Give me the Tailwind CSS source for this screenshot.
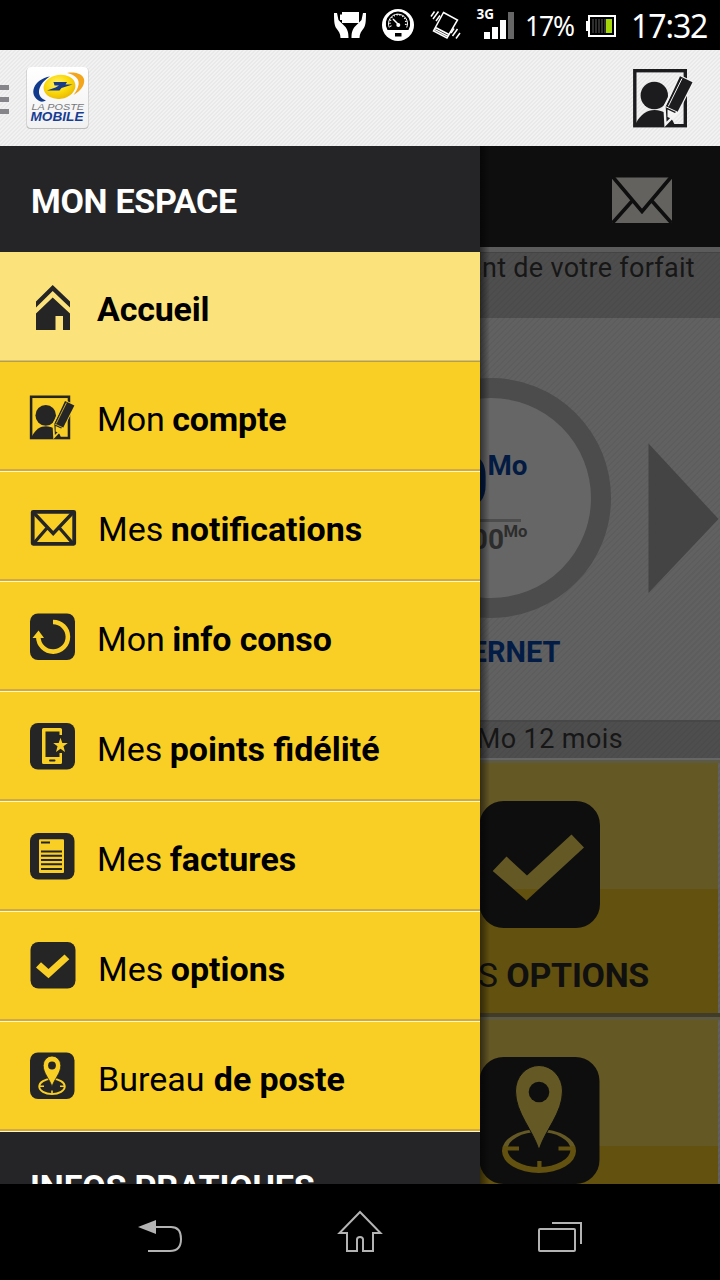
<!DOCTYPE html>
<html lang="fr">
<head>
<meta charset="utf-8">
<title>La Poste Mobile</title>
<script src="https://cdn.jsdelivr.net/npm/@tailwindcss/browser@4"></script>
</head>
<body class="w-[720px] h-[1280px] overflow-hidden bg-black flex flex-col font-['Roboto',sans-serif]">

<svg class="hidden">
  <symbol id="account" viewBox="630 66 66 64">
    <rect x="634.8" y="70.7" width="50.5" height="55" fill="none" stroke="currentColor" stroke-width="3.4"/>
    <circle cx="654.3" cy="95.5" r="13.7" fill="currentColor"/>
    <path d="M636 123C641 114 647 110 654.500 110C663 110 671 115 674.500 124.500V126H636Z" fill="currentColor"/>
    <path d="M680 76.300L692.500 82.300L677.500 112L665.500 124.500L664.500 106.500Z" fill="currentColor" stroke="var(--paper)" stroke-width="2.400"/>
    <path d="M680 76.300L692.500 82.300L677.500 112L666 106.500Z" fill="currentColor"/>
    <path d="M682 78.500L668.300 106.300M666 106.800L677.600 112.200" stroke="var(--paper)" stroke-width="1" fill="none"/>
    <path d="M667.500 109.500L675.500 113.200L670.500 118.200L667.500 117Z" fill="var(--paper)"/>
  </symbol>
</svg>

<!-- Status bar -->
<header class="h-[50px] shrink-0 flex items-start text-white font-['Noto_Sans',sans-serif]">
  <svg class="ml-[330px] w-[190px] h-[50px] shrink-0" viewBox="330 0 190 50">
    <g fill="#fff">
      <path d="M342 12H359V23H342V20H340V14.500H342Z"/>
      <path id="hand" d="M334 13H337L338.500 20L345 26.500C347.500 29.500 348.500 32 348.500 38H340.500C340.500 33.500 338.500 31 336.500 28.500C334.500 26 334 22 334 13Z"/>
      <use href="#hand" transform="matrix(-1 0 0 1 700 0)"/>
      <circle cx="398" cy="25" r="16"/>
    </g>
    <path d="M387.500 30A12.200 12.200 0 1 1 408.500 30Z" fill="#000"/>
    <path d="M389.300 27.500A9.500 9.500 0 1 1 406.700 27.500" fill="none" stroke="#fff" stroke-width="1"/>
    <path d="M391 26.500A8 8 0 1 1 405 26.500" fill="none" stroke="#fff" stroke-width="1.800" stroke-dasharray="1 2"/>
    <path d="M393 19L398.500 24.500" stroke="#fff" stroke-width="1.500"/>
    <circle cx="398.300" cy="25" r="2" fill="#fff"/>
    <rect x="395" y="33" width="6.500" height="3.500" fill="#000"/>
    <g fill="none" stroke="#fff" stroke-width="1.500">
      <path d="M443.500 12.500L457.500 20L447 38L433.500 31ZM435.500 27.500L449 34.500M434.500 29.300L448 36.300"/>
      <path d="M431 16.500L434.500 11.500M433 19L438.500 11.500M436 21L440 15.500M451 33L454 28.500M452.500 36L457.500 29M456 38.500L460 33"/>
    </g>
    <text x="476.500" y="19" font-family="Noto Sans" font-weight="700" font-size="14" textLength="17.500" lengthAdjust="spacingAndGlyphs" fill="#fff">3G</text>
    <path d="M484 32h6v7h-6ZM492 27h6v12h-6ZM500 20h6v19h-6Z" fill="#fff"/>
    <path d="M508 12h6v27h-6Z" fill="#666"/>
  </svg>
  <span class="ml-[5px] mt-[6px] w-[61px] text-[26.5px] leading-[40px] tracking-[-1.2px]">17%</span>
  <svg class="w-[32px] h-[50px] shrink-0" viewBox="586 0 32 50">
    <rect x="589" y="16" width="26" height="20" fill="none" stroke="#fff" stroke-width="2"/>
    <rect x="586" y="21" width="2.500" height="10" fill="#fff"/>
    <g fill="#2d2d2d"><path d="M592 19h2v14h-2ZM595 19h2v14h-2ZM598 19h2v14h-2ZM601 19h2v14h-2ZM604 19h2v14h-2Z"/></g>
    <rect x="606" y="19" width="6" height="14" fill="#a4d60a"/>
  </svg>
  <span class="ml-[13px] mt-[5px] text-[32px] leading-[42px] tracking-[-1.1px]">17:32</span>
</header>

<!-- Action bar -->
<div class="h-[96px] shrink-0 flex items-center bg-[repeating-linear-gradient(135deg,#f2f2f2_0px,#f2f2f2_1.6px,#e9e9e9_1.6px,#e9e9e9_2.83px)]">
  <div class="w-[9px] flex flex-col gap-[7px] mt-[3px]">
    <i class="block h-[5px] bg-[#85858a]"></i><i class="block h-[5px] bg-[#85858a]"></i><i class="block h-[5px] bg-[#85858a]"></i>
  </div>
  <svg class="ml-[15px] w-[68px] h-[68px]" viewBox="24 64 68 68">
    <defs>
      <radialGradient id="sun" cx=".45" cy=".35" r=".7"><stop offset="0" stop-color="#fff27a"/><stop offset=".5" stop-color="#fbdc0c"/><stop offset="1" stop-color="#e9b500"/></radialGradient>
      <linearGradient id="card" x2="0" y2="1"><stop offset="0" stop-color="#fff"/><stop offset="1" stop-color="#f1f1f2"/></linearGradient>
    </defs>
    <rect x="26.500" y="67.500" width="62" height="61.500" rx="4" fill="#bbb"/>
    <rect x="27" y="67" width="61" height="61" rx="4" fill="url(#card)"/>
    <path d="M50 76.500C34 79 27 95 40.500 101.500C42.500 102 45 101 46 100.500C34 96 39 83 50 76.500Z" fill="#123a8c"/>
    <path d="M67 73C78 71 88 76 83 86C81 90 77 93 73.500 95C79 88 84 77 67 73Z" fill="#f3a51c"/>
    <ellipse cx="59.500" cy="86.800" rx="16" ry="12" transform="rotate(-8 59.500 86.800)" fill="url(#sun)"/>
    <path d="M53.500 82H67L65.500 84.500H72.500L61.500 88L59.500 90.500H47L55.500 87.500L59 85.500H54.500Z" fill="#173b85"/>
    <text x="31.500" y="109.500" font-family="Liberation Sans" font-style="italic" font-size="9.300" textLength="52.500" lengthAdjust="spacingAndGlyphs" fill="#77787b">LA POSTE</text>
    <text x="30.500" y="121" font-family="Liberation Sans" font-style="italic" font-weight="700" font-size="12.500" textLength="53" lengthAdjust="spacingAndGlyphs" fill="#173d93">MOBILE</text>
  </svg>
  <svg class="ml-[538px] w-[66px] h-[64px] text-[#1c1b1e] [--paper:#f4f4f4]"><use href="#account"/></svg>
</div>

<div class="h-[1038px] shrink-0 flex">
  <!-- Drawer -->
  <nav class="w-[480px] shrink-0 overflow-hidden text-black text-[34px] leading-[40px] bg-[#f9cf25]">
    <h2 class="h-[106px] pl-[31px] pt-[35px] bg-[#252527] text-white font-bold text-[34px] tracking-[-0.3px]">MON ESPACE</h2>

    <div class="h-[110px] flex bg-[#fbe27b] border-b border-[#b39e4e] shadow-[inset_0_-1px_#d8c06a]">
      <svg class="ml-[28px] w-[50px] h-[107px]" viewBox="28 252 50 107" fill="#252525">
        <path d="M52.700 285L70 301.500V307.500L52.700 291L36 307.500V301.500Z"/>
        <path d="M52.700 297.500L70 313.500V330H63V316H55.500V330H36V313.500Z"/>
      </svg>
      <p class="ml-[19px] pt-[37px]"><b class="tracking-[-0.2px]">Accueil</b></p>
    </div>

    <div class="h-[110px] flex border-b border-[#fff5d2] shadow-[inset_0_-2px_#d0ab3a]">
      <svg class="ml-[28px] w-[50px] h-[107px] text-[#252525] [--paper:#f9cf25]" viewBox="28 362 50 107"><use href="#account" x="27.500" y="392.500" width="49.500" height="49.500"/></svg>
      <p class="ml-[19px] pt-[37px]">Mon <b class="ml-[-1px] tracking-[-0.2px]">compte</b></p>
    </div>

    <div class="h-[110px] flex border-b border-[#fff5d2] shadow-[inset_0_-2px_#d0ab3a]">
      <svg class="ml-[28px] w-[50px] h-[107px]" viewBox="28 472 50 107" fill="none" stroke="#252525" stroke-width="3.800">
        <rect x="32.700" y="511.800" width="41.500" height="32" rx=".5"/>
        <path d="M34 513L53.200 533.500L72.500 513M34 543L47 528M72.500 543L59.500 528" stroke-width="3.300"/>
      </svg>
      <p class="ml-[20px] pt-[37px]">Mes <b class="ml-[-1px]">notifications</b></p>
    </div>

    <div class="h-[110px] flex border-b border-[#fff5d2] shadow-[inset_0_-2px_#d0ab3a]">
      <svg class="ml-[28px] w-[50px] h-[107px]" viewBox="28 582 50 107">
        <rect x="30" y="613.500" width="45" height="46.500" rx="8" fill="#252525"/>
        <path d="M53 622A14.800 14.800 0 1 1 38.300 637" fill="none" stroke="#f9cf25" stroke-width="4.600"/>
        <path d="M32.500 638L38.500 630.500L44 638Z" fill="#f9cf25"/>
      </svg>
      <p class="ml-[19px] pt-[37px]">Mon <b class="ml-[-1px] tracking-[-0.1px]">info conso</b></p>
    </div>

    <div class="h-[110px] flex border-b border-[#fff5d2] shadow-[inset_0_-2px_#d0ab3a]">
      <svg class="ml-[28px] w-[50px] h-[107px]" viewBox="28 692 50 107">
        <rect x="30" y="723" width="45" height="46.500" rx="8" fill="#252525"/>
        <path d="M43.500 728H60.500Q62 728 62 729.500V735H59.500V731.500H45.500V757H59.500V753H62V762.500Q62 764 60.500 764H43.500Q42 764 42 762.500V729.500Q42 728 43.500 728Z" fill="#f9cf25"/>
        <rect x="49" y="759.500" width="6.500" height="2" rx="1" fill="#252525"/>
        <path d="M60.500 737.800L62.300 743H67.800L63.500 746.300L65 752L60.500 748.700L56 752L57.500 746.300L53.200 743H58.700Z" fill="#f9cf25"/>
      </svg>
      <p class="ml-[19px] pt-[37px]">Mes <b class="ml-[-1px]">points fidélité</b></p>
    </div>

    <div class="h-[110px] flex border-b border-[#fff5d2] shadow-[inset_0_-2px_#d0ab3a]">
      <svg class="ml-[28px] w-[50px] h-[107px]" viewBox="28 802 50 107">
        <rect x="30" y="833" width="44.500" height="46.500" rx="8" fill="#252525"/>
        <rect x="39" y="839.300" width="25" height="33.700" rx="1" fill="#f9cf25"/>
        <path d="M41 842.500H50M41 851.500H62M41 855.700H62M41 860H62M41 864.200H62M41 869H62" stroke="#252525" stroke-width="2"/>
      </svg>
      <p class="ml-[19px] pt-[37px]">Mes <b class="ml-[-1px]">factures</b></p>
    </div>

    <div class="h-[110px] flex border-b border-[#fff5d2] shadow-[inset_0_-2px_#d0ab3a]">
      <svg class="ml-[28px] w-[50px] h-[107px]" viewBox="28 912 50 107">
        <rect x="30.500" y="942" width="45" height="46.500" rx="8" fill="#252525"/>
        <path d="M36 967.500L41 962.300L48.500 969L64.500 954.500L69.300 959.300L48.500 978.300Z" fill="#f9cf25"/>
      </svg>
      <p class="ml-[20px] pt-[37px]">Mes <b class="ml-[-1px]">options</b></p>
    </div>

    <div class="h-[110px] flex border-b border-[#fff5d2] shadow-[inset_0_-2px_#d0ab3a]">
      <svg class="ml-[28px] w-[50px] h-[107px]" viewBox="28 1022 50 107">
        <rect x="30" y="1052.500" width="44.500" height="46.500" rx="8" fill="#252525"/>
        <ellipse cx="52" cy="1086.500" rx="12.800" ry="7.600" fill="none" stroke="#f9cf25" stroke-width="1.800"/>
        <path d="M40 1086.300H44M60 1086.300H64M52 1090.500V1094" stroke="#f9cf25" stroke-width="1.600"/>
        <path d="M52 1086.500C49.500 1079 43.200 1073 43.200 1065.500A8.800 9.500 0 0 1 60.800 1065.500C60.800 1073 54.500 1079 52 1086.500Z" fill="#f9cf25" stroke="#252525" stroke-width=".8"/>
        <circle cx="52" cy="1065.500" r="3.900" fill="#252525"/>
      </svg>
      <p class="ml-[20px] pt-[37px]">Bureau <b class="ml-[1px] tracking-[-0.1px]">de poste</b></p>
    </div>

    <h2 class="h-[106px] pl-[30px] pt-[35px] bg-[#252527] text-white font-bold text-[34px] tracking-[-0.15px]">INFOS PRATIQUES</h2>
  </nav>

  <!-- Dimmed home screen behind the drawer -->
  <main class="relative w-[240px] overflow-hidden flex flex-col text-[#171717] bg-[repeating-linear-gradient(135deg,#616161_0px,#616161_2.4px,#5d5d5d_2.4px,#5d5d5d_4.24px)]">
    <div class="h-[101px] shrink-0 bg-[#0e0e0e] flex pl-[130px] pt-[30px]">
      <svg class="w-[64px] h-[48px]" viewBox="610 176 64 48">
        <rect x="612" y="177.500" width="60" height="45.500" fill="#63625f"/>
        <path d="M612.500 176.500L642 211.500L671.500 176.500M612.500 223L632.500 200.500M671.500 223L651.500 200.500" fill="none" stroke="#0e0e0e" stroke-width="3.600"/>
      </svg>
    </div>
    <div class="h-[5px] shrink-0 bg-[#5b5b5b]"></div>
    <div class="h-[66px] shrink-0 border-t border-[#444] bg-[repeating-linear-gradient(135deg,#4e4e4e_0px,#4e4e4e_2.4px,#4b4b4b_2.4px,#4b4b4b_4.24px)] flex justify-end pr-[25px]">
      <p class="whitespace-nowrap text-[27px] leading-[32px] tracking-[0.3px] mt-[-1px]">nt de votre forfait</p>
    </div>
    <svg class="h-[402px] w-[240px] shrink-0" viewBox="480 318 240 402" font-family="Roboto" font-weight="700">
      <circle cx="491" cy="498" r="110" fill="#666" stroke="#4c4c4c" stroke-width="20"/>
      <path d="M648.500 443.500L718.500 519L648.500 593Z" fill="#444"/>
      <text x="488.700" y="505" text-anchor="end" font-size="68" fill="#031b42">0</text>
      <text x="487.500" y="475" font-size="27" textLength="40" lengthAdjust="spacingAndGlyphs" fill="#031b42">Mo</text>
      <path d="M480 520.500H521" stroke="#4c4c4c" stroke-width="3"/>
      <text x="504" y="549" text-anchor="end" font-size="28" fill="#2d2d2d">00</text>
      <text x="503.500" y="537" font-size="16.500" textLength="24" lengthAdjust="spacingAndGlyphs" fill="#2d2d2d">Mo</text>
      <text x="560.500" y="662" text-anchor="end" font-size="29" fill="#031c45">ERNET</text>
    </svg>
    <div class="h-[38px] shrink-0 border-t-2 border-[#474747] bg-[repeating-linear-gradient(135deg,#4e4e4e_0px,#4e4e4e_2.4px,#4b4b4b_2.4px,#4b4b4b_4.24px)] flex justify-end pr-[97px]">
      <p class="whitespace-nowrap text-[27px] leading-[34px] tracking-[0.4px]">Mo 12 mois</p>
    </div>
    <div class="h-[2px] shrink-0 bg-[#666]"></div>
    <div class="h-[3px] shrink-0 bg-[#5c5945]"></div>
    <section class="h-[250px] w-[238px] shrink-0 bg-[linear-gradient(#645825_126px,#63510f_126px)] flex flex-col">
      <svg class="w-[238px] h-[180px] shrink-0" viewBox="480 763 238 180">
        <path fill-rule="evenodd" fill="#0e0e0e" d="M503.500 801H576A24 24 0 0 1 600 825V904A24 24 0 0 1 576 928H503.500A24 24 0 0 1 479.500 904V825A24 24 0 0 1 503.500 801ZM492.700 871L506.500 856.500L527 875.500L571.500 834.500L584 847.500L526.500 900.500Z"/>
      </svg>
      <p class="whitespace-nowrap self-end pr-[69px] text-[34px] leading-[40px] mt-[12px] text-[#101010]">S <b class="tracking-[-0.3px]">OPTIONS</b></p>
    </section>
    <div class="h-[4px] shrink-0 bg-[#413c29]"></div>
    <div class="h-[3px] shrink-0 bg-[#5d5940]"></div>
    <section class="h-[164px] w-[238px] shrink-0 bg-[linear-gradient(#645825_126px,#63510f_126px)]">
      <svg class="w-[238px] h-[164px]" viewBox="480 1020 238 164">
        <rect x="479.500" y="1057" width="120" height="127" rx="24" fill="#0e0e0e"/>
        <defs><linearGradient id="tone" gradientUnits="userSpaceOnUse" x1="0" x2="0" y1="1020" y2="1272"><stop offset=".5" stop-color="#645825"/><stop offset=".5" stop-color="#63510f"/></linearGradient></defs>
        <path fill-rule="evenodd" fill="url(#tone)" d="M502 1151A37 22 0 1 1 576 1151A37 22 0 1 1 502 1151ZM507.500 1149.500A31.500 17.500 0 1 0 570.500 1149.500A31.500 17.500 0 1 0 507.500 1149.500Z"/>
        <path fill="url(#tone)" d="M507 1146.500H519V1150.500H507ZM558.500 1146.500H571V1150.500H558.500ZM537.300 1161H541.500V1168.500H537.300Z"/>
        <path d="M539 1150C533 1130 515.500 1113 515.500 1091A23.500 25.500 0 0 1 562.500 1091C562.500 1113 545 1130 539 1150Z" fill="#645825" stroke="#0e0e0e" stroke-width="1"/>
        <circle cx="539" cy="1092" r="10.300" fill="#0e0e0e"/>
      </svg>
    </section>
    <div class="absolute left-0 top-0 h-full w-[10px] bg-linear-to-r from-black/50 to-transparent"></div>
  </main>
</div>

<!-- Navigation bar -->
<footer class="h-[96px] shrink-0 flex items-center justify-between pl-[136px] pr-[134px] text-[#b3b3b3]">
  <svg class="w-[50px] h-[96px]" viewBox="136 1184 50 96" fill="none" stroke="currentColor" stroke-width="2">
    <path d="M138 1227L156 1220V1234Z" fill="currentColor" stroke="none"/>
    <path d="M155 1227H171C178 1227 181 1231 181 1239C181 1247 178 1251 170 1251H148"/>
  </svg>
  <svg class="w-[50px] h-[96px]" viewBox="336 1184 50 96" fill="none" stroke="currentColor" stroke-width="2">
    <path d="M360 1212L339.500 1233H347V1251H357V1239.500Q357 1237 360 1237Q363 1237 363 1239.500V1251H373V1233H380.500Z"/>
  </svg>
  <svg class="w-[50px] h-[96px]" viewBox="536 1184 50 96" fill="none" stroke="currentColor" stroke-width="2">
    <rect x="539" y="1229" width="36" height="22" rx="1"/><path d="M552 1223H581V1244"/>
  </svg>
</footer>
</body>
</html>
